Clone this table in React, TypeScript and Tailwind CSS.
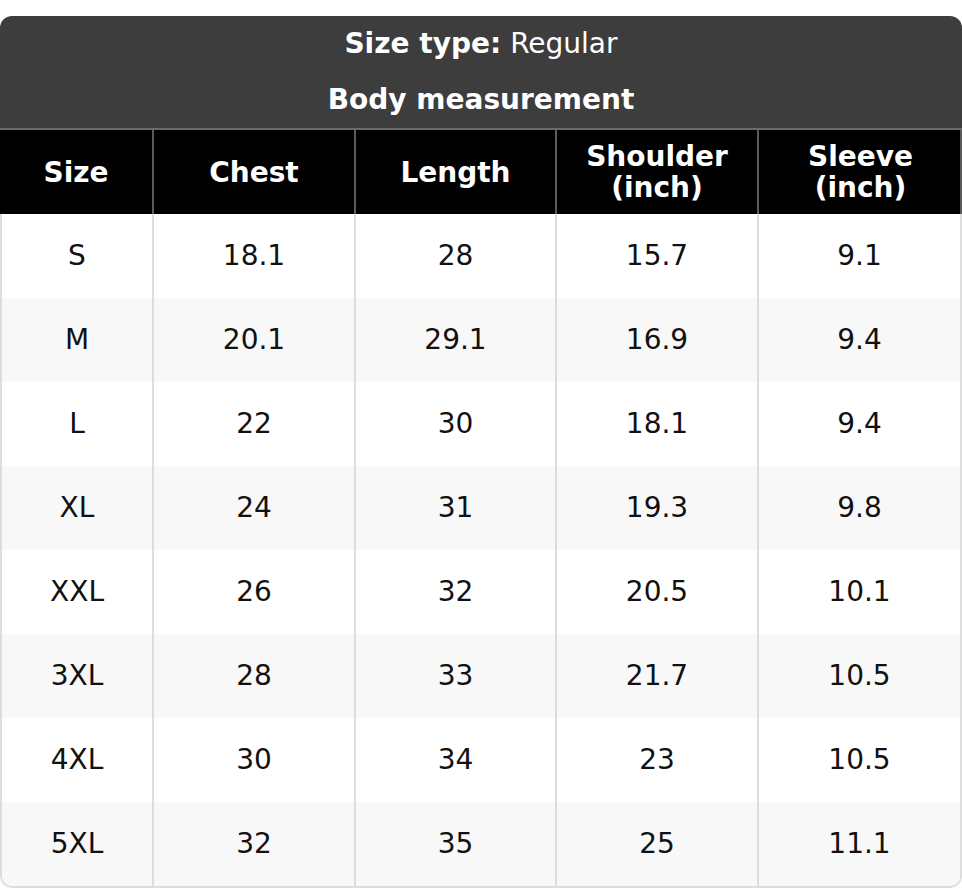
import React from "react";

const rows = [
  ["S", "18.1", "28", "15.7", "9.1"],
  ["M", "20.1", "29.1", "16.9", "9.4"],
  ["L", "22", "30", "18.1", "9.4"],
  ["XL", "24", "31", "19.3", "9.8"],
  ["XXL", "26", "32", "20.5", "10.1"],
  ["3XL", "28", "33", "21.7", "10.5"],
  ["4XL", "30", "34", "23", "10.5"],
  ["5XL", "32", "35", "25", "11.1"],
];

const heads: string[][] = [["Size"], ["Chest"], ["Length"], ["Shoulder", "(inch)"], ["Sleeve", "(inch)"]];

export default function App() {
  return (
    <div className="w-[962px] h-[888px] bg-white pt-[16px]" style={{ fontFamily: '"DejaVu Sans", "Liberation Sans", sans-serif' }}>
      <div className="w-[962px] rounded-[12px] overflow-hidden">
        <div className="bg-[#3d3d3d] text-white text-[28px] leading-[32px] border-b-2 border-[#6b6b6b]">
          <div className="h-[56px] flex items-center justify-center">
            <span className="font-bold">Size type:</span>
            <span className="ml-[9px]">Regular</span>
          </div>
          <div className="h-[56px] flex items-center justify-center font-bold">Body measurement</div>
        </div>
        <div className="grid grid-cols-[154px_202px_201px_202px_203px] bg-black text-white font-bold text-[28px] leading-[31px] border-r-2 border-[#5a5a5a]">
          {heads.map((h, i) => (
            <div
              key={i}
              className={`h-[84px] flex flex-col items-center justify-center text-center ${i < 4 ? "border-r-2 border-[#5a5a5a]" : ""}`}
            >
              {h.map((l, j) => (
                <span key={j}>{l}</span>
              ))}
            </div>
          ))}
        </div>
        <div className="border-x-2 border-b-2 border-[#dddddd] rounded-b-[12px] overflow-hidden">
          {rows.map((r, ri) => (
            <div
              key={ri}
              className={`grid grid-cols-[152px_202px_201px_202px_201px] text-[28px] leading-[32px] text-[#111111] ${ri % 2 === 1 ? "bg-[#f8f8f8]" : "bg-white"}`}
            >
              {r.map((c, ci) => (
                <div
                  key={ci}
                  className={`h-[84px] flex items-center justify-center ${ci < 4 ? "border-r-2 border-[#dddddd]" : ""}`}
                >
                  {c}
                </div>
              ))}
            </div>
          ))}
        </div>
      </div>
    </div>
  );
}
